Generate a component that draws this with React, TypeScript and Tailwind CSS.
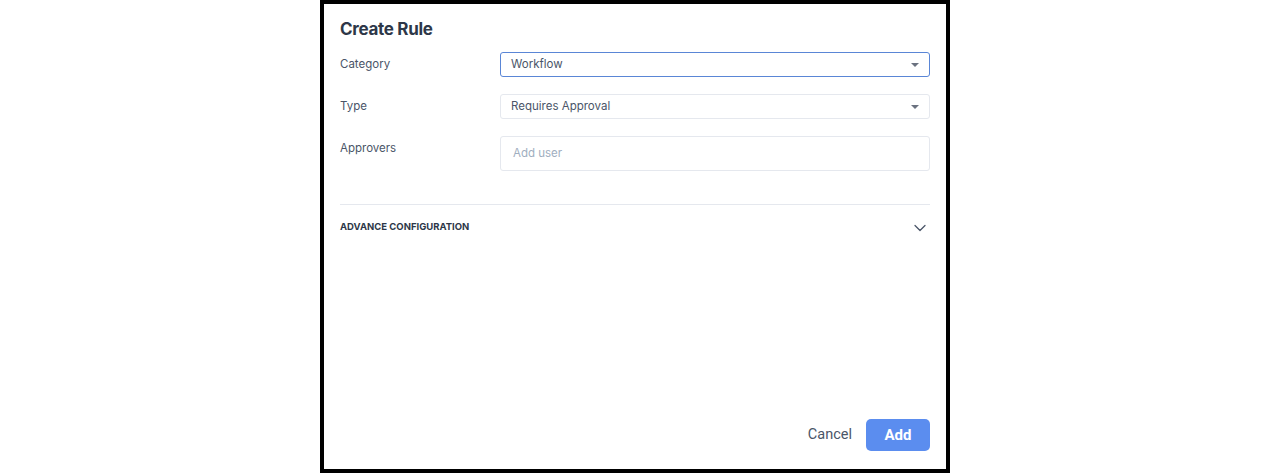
import { ChevronDown } from "lucide-react"

function Caret() {
  return (
    <svg width="8" height="4" viewBox="0 0 8 4" className="shrink-0">
      <path d="M0 0h8L4 4z" fill="#6b7280" />
    </svg>
  )
}

function Row({ label, children }: { label: string; children: React.ReactNode }) {
  return (
    <div className="flex items-start">
      <div className="w-[160px] shrink-0 pt-[5px] text-[11.5px] leading-[14px] text-[#4a5568]">{label}</div>
      <div className="flex-1">{children}</div>
    </div>
  )
}

export default function App() {
  return (
    <div className="flex w-full justify-center bg-white" style={{ fontFamily: "Inter, 'Noto Sans', sans-serif" }}>
      <div className="flex h-[473px] w-[630px] flex-col border-4 border-black bg-white px-4 pb-[18px] pt-[14px]">
        <h2 className="text-[17px] font-bold leading-[22px] tracking-[-0.3px] text-[#2d3748]">Create Rule</h2>

        <div className="mt-[12px] flex flex-col gap-[17px]">
          <Row label="Category">
            <div className="flex h-[25px] items-center justify-between rounded-[3px] border border-[#5a86d6] pl-[10px] pr-[10px] text-[11.5px] text-[#4a5568]">
              <span>Workflow</span>
              <Caret />
            </div>
          </Row>
          <Row label="Type">
            <div className="flex h-[25px] items-center justify-between rounded-[3px] border border-[#e5e8ee] pl-[10px] pr-[10px] text-[11.5px] text-[#4a5568]">
              <span>Requires Approval</span>
              <Caret />
            </div>
          </Row>
          <Row label="Approvers">
            <div className="flex h-[35px] items-center rounded-[3px] border border-[#e5e8ee] pl-[12px] text-[11.5px] text-[#a0aec0]">
              Add user
            </div>
          </Row>
        </div>

        <div className="mt-[33px] border-t border-[#e5e8ee]" />
        <div className="flex h-[45px] items-center justify-between">
          <span className="text-[9.5px] font-bold text-[#2d3748]">ADVANCE CONFIGURATION</span>
          <ChevronDown size={20} strokeWidth={1.5} className="mr-0 text-[#4a5568]" />
        </div>

        <div className="mt-auto flex items-center justify-end gap-[14px]" style={{ fontFamily: "Roboto, 'Liberation Sans', sans-serif" }}>
          <button className="text-[14.5px] text-[#4a5568]">Cancel</button>
          <button className="h-[32px] w-[64px] rounded-[5px] bg-[#5b8def] text-[15px] font-bold text-white">Add</button>
        </div>
      </div>
    </div>
  )
}
